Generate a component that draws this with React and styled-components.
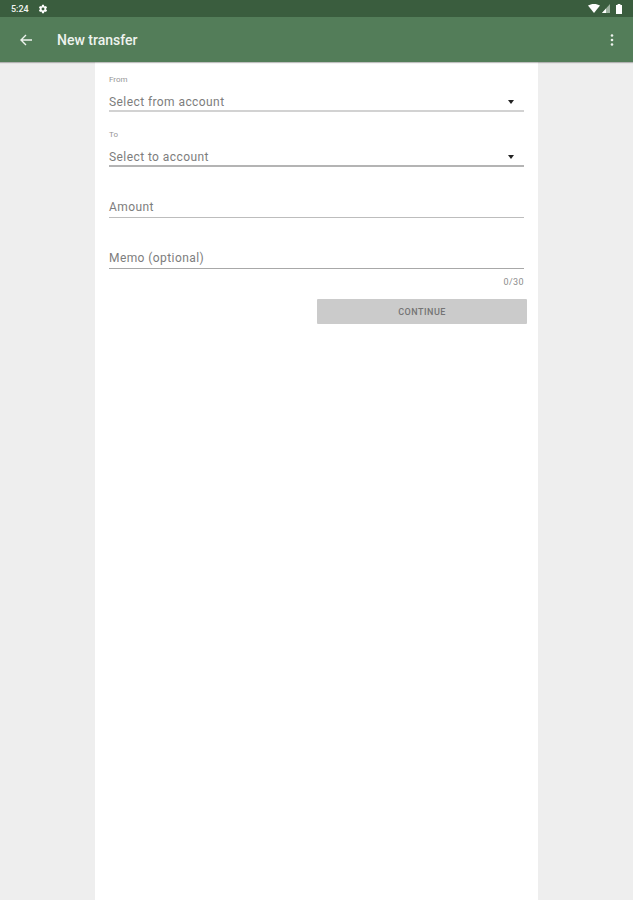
import React from "react";
import styled, { createGlobalStyle } from "styled-components";

const Global = createGlobalStyle`
  html, body { margin: 0; padding: 0; background: #eeeeee; }
  body { font-family: Roboto, "Liberation Sans", sans-serif; }
  * { box-sizing: border-box; }
`;

const Page = styled.div`
  width: 633px;
  height: 900px;
  display: flex;
  flex-direction: column;
  overflow: hidden;
  background: #eeeeee;
`;

const StatusBar = styled.div`
  height: 17px;
  flex: none;
  background: #3a5d3e;
  color: #fff;
  display: flex;
  align-items: center;
  padding: 0 10px 0 11px;
`;

const Clock = styled.span`
  font-size: 9px;
  font-weight: 500;
  line-height: 18px;
  margin-right: 9px;
  color: #f2f5f2;
`;

const Spacer = styled.div`
  flex: 1;
`;

const Tray = styled.div`
  display: flex;
  align-items: center;
  gap: 2px;
`;

const AppBar = styled.header`
  height: 45px;
  flex: none;
  background: #537d59;
  box-shadow: 0 1px 1px rgba(0, 0, 0, 0.25);
  display: flex;
  align-items: center;
  padding: 0 19px 0 18px;
  color: #fff;
  position: relative;
  z-index: 1;
`;

const Title = styled.h1`
  margin: 0 0 0 23px;
  font-size: 14px;
  font-weight: 500;
  color: #eef3ee;
`;

const Sheet = styled.main`
  width: 443px;
  flex: 1;
  margin-left: 95px;
  background: #fff;
  padding: 11px 11px 0 14px;
  display: flex;
  flex-direction: column;
`;

const Caption = styled.label`
  display: block;
  height: 14px;
  font-size: 8px;
  line-height: 14px;
  color: #969696;
`;

const SelectRow = styled.div`
  height: 25px;
  margin-right: 3px;
  border-bottom: 2px solid ${(p) => p.$line};
  display: flex;
  align-items: flex-end;
  justify-content: space-between;
  padding: 0 10px 1px 0;
  margin-bottom: ${(p) => p.$after}px;
`;

const Value = styled.span`
  font-size: 12px;
  line-height: 14px;
  color: #7d7d7d;
  letter-spacing: 0.42px;
`;

const Caret = styled.span`
  width: 0;
  height: 0;
  margin-bottom: 5px;
  border-left: 3.5px solid transparent;
  border-right: 3.5px solid transparent;
  border-top: 4px solid #222;
`;

const InputRow = styled.div`
  height: ${(p) => p.$h}px;
  margin-right: 3px;
  border-bottom: 1.5px solid ${(p) => p.$line};
  display: flex;
  align-items: flex-end;
  padding-bottom: 3px;
`;

const Counter = styled.div`
  margin-right: 3px;
  text-align: right;
  font-size: 9px;
  line-height: 12px;
  margin-top: 7px;
  color: #8c8c8c;
  letter-spacing: 0.4px;
`;

const Actions = styled.div`
  display: flex;
  justify-content: flex-end;
  margin-top: 11px;
`;

const Continue = styled.button`
  width: 210px;
  height: 25px;
  border: 0;
  border-radius: 1px;
  padding: 0;
  background: #cbcbcb;
  color: #747474;
  font-family: inherit;
  font-size: 9px;
  font-weight: 500;
  letter-spacing: 0.5px;
  text-transform: uppercase;
`;

export default function App() {
  return (
    <Page>
      <Global />
      <StatusBar>
        <Clock>5:24</Clock>
        <svg width="10" height="10" viewBox="0 0 24 24" fill="#fff">
          <path fillRule="evenodd" d="M19.4 13c.04-.33.06-.66.06-1s-.02-.67-.07-1l2.11-1.63a.5.5 0 0 0 .12-.64l-2-3.46a.5.5 0 0 0-.61-.22l-2.49 1a7.3 7.3 0 0 0-1.69-.98l-.38-2.65A.49.49 0 0 0 14 2h-4a.49.49 0 0 0-.49.42l-.38 2.65c-.61.25-1.17.59-1.69.98l-2.49-1a.5.5 0 0 0-.61.22l-2 3.46a.5.5 0 0 0 .12.64L4.57 11c-.04.33-.07.67-.07 1s.03.67.07 1l-2.11 1.63a.5.5 0 0 0-.12.64l2 3.46c.12.22.39.3.61.22l2.49-1c.52.4 1.08.73 1.69.98l.38 2.65c.05.24.26.42.49.42h4c.25 0 .45-.18.49-.42l.38-2.65c.61-.25 1.17-.59 1.69-.98l2.49 1c.22.08.49 0 .61-.22l2-3.46a.5.5 0 0 0-.12-.64L19.4 13zM12 15.5a3.5 3.5 0 1 1 0-7 3.5 3.5 0 0 1 0 7z" />
        </svg>
        <Spacer />
        <Tray>
          <svg width="12" height="9" viewBox="0 0 12 9" fill="#fff">
            <path d="M0 1.6C1.6.6 3.7 0 6 0s4.4.6 6 1.6L6 9z" />
          </svg>
          <svg width="8" height="9" viewBox="0 0 8 9">
            <path d="M0 9 8 0v9z" fill="#9fb3a2" />
            <path d="M0 9 4 4.5V9z" fill="#fff" />
          </svg>
          <svg width="8" height="10" viewBox="0 0 8 10" fill="#fff" style={{ marginLeft: 3 }}>
            <path d="M2.6 0h2.8v1H7v9H1V1h1.6z" />
          </svg>
        </Tray>
      </StatusBar>
      <AppBar>
        <svg width="16" height="16" viewBox="0 0 16 16" fill="none" stroke="#eef3ee" strokeWidth="1.4">
          <path d="M14 8H3M8 3 3 8l5 5" />
        </svg>
        <Title>New transfer</Title>
        <Spacer />
        <svg width="4" height="14" viewBox="0 0 4 14" fill="#eef3ee">
          <circle cx="2" cy="2.5" r="1.3" />
          <circle cx="2" cy="7" r="1.3" />
          <circle cx="2" cy="11.5" r="1.3" />
        </svg>
      </AppBar>
      <Sheet>
        <Caption>From</Caption>
        <SelectRow $line="#d2d2d2" $after={16}>
          <Value>Select from account</Value>
          <Caret />
        </SelectRow>
        <Caption>To</Caption>
        <SelectRow $line="#b4b4b4" $after={0}>
          <Value>Select to account</Value>
          <Caret />
        </SelectRow>
        <InputRow $h={51} $line="#bdbdbd">
          <Value>Amount</Value>
        </InputRow>
        <InputRow $h={51} $line="#a8a8a8">
          <Value>Memo (optional)</Value>
        </InputRow>
        <Counter>0/30</Counter>
        <Actions>
          <Continue>Continue</Continue>
        </Actions>
      </Sheet>
    </Page>
  );
}
